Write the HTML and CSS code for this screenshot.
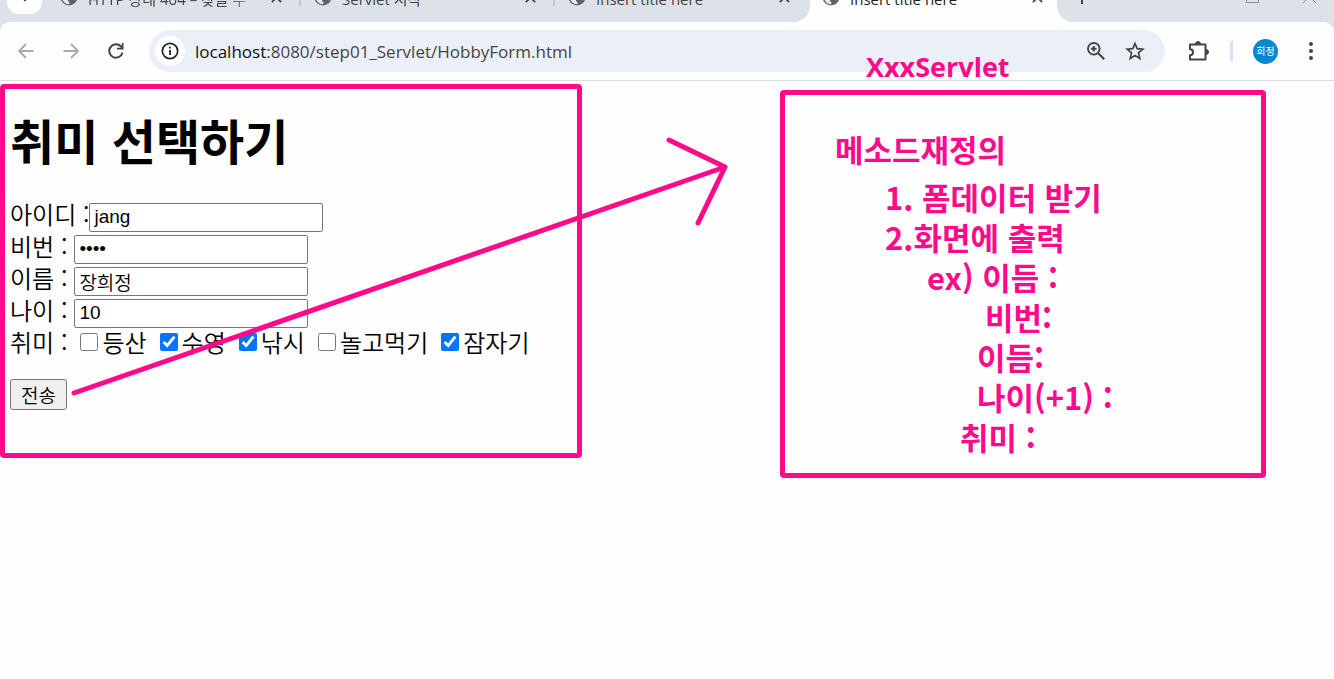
FILE: index.html
```html
<!DOCTYPE html>
<html lang="ko">
<head>
<meta charset="utf-8">
<title>취미 선택하기</title>
<link rel="stylesheet" href="styles.css">
</head>
<body>
<svg class="defs" aria-hidden="true">
  <symbol id="globe" viewBox="0 0 18 18"><circle cx="9" cy="9" r="8.500" fill="#5f6368"/><path d="M8 2c4-.5 7.500 2.500 8 7 0 1.500-.3 2.500-1 3.500-.8-1-2-.5-3-1.500-1-1 0-2.500-1.500-3S8 7.500 7.500 6 9 3.500 8 2zM2 9c2 0 3.500.5 5 1.500s.5 2.500 2 3.500c.8.600.5 1.500 0 2.200C5 16.200 2 13 2 9z" fill="#e8eaed"/></symbol>
  <symbol id="close" viewBox="0 0 12 12"><path d="M1 1l10 10M11 1L1 11" stroke="#474747" stroke-width="2"/></symbol>
</svg>
<header class="browser">
  <nav class="tabs" aria-label="탭">
    <div class="inactive-tabs">
      <button class="tab-search" aria-label="탭 검색"><svg width="12" height="8" viewBox="0 0 12 8"><path d="M1 1l5 5 5-5" fill="none" stroke="#333" stroke-width="2"/></svg></button>
      <div class="tab line"><svg class="globe"><use href="#globe"/></svg><span class="tab-title fade">HTTP 상태 404 – 찾을 수</span><svg class="close"><use href="#close"/></svg></div>
      <div class="tab line"><svg class="globe"><use href="#globe"/></svg><span class="tab-title">Servlet 시작</span><svg class="close"><use href="#close"/></svg></div>
      <div class="tab"><svg class="globe"><use href="#globe"/></svg><span class="tab-title">Insert title here</span><svg class="close"><use href="#close"/></svg></div>
    </div>
    <div class="tab active"><svg class="globe"><use href="#globe"/></svg><span class="tab-title">Insert title here</span><svg class="close"><use href="#close"/></svg></div>
    <div class="strip-end">
      <svg width="14" height="14" viewBox="0 0 14 14"><path d="M7 0v14M0 7h14" stroke="#474747" stroke-width="2"/></svg>
      <span class="window-buttons">
        <svg width="13" height="13" viewBox="0 0 13 13"><path d="M.5.5h12v12H.5z" fill="none" stroke="#8a8d91"/></svg>
        <svg width="13" height="13" viewBox="0 0 13 13"><path d="M0 0l13 13M13 0L0 13" stroke="#8a8d91"/></svg>
      </span>
    </div>
  </nav>
  <div class="toolbar">
    <button class="icon-button" aria-label="뒤로"><svg width="16" height="16" viewBox="0 0 16 16"><path d="M15.500 8H1.500M8 1L1 8l7 7" fill="none" stroke="#aaa" stroke-width="1.800"/></svg></button>
    <button class="icon-button" aria-label="앞으로"><svg width="16" height="16" viewBox="0 0 16 16"><path d="M.5 8h14M8 1l7 7-7 7" fill="none" stroke="#aaa" stroke-width="1.800"/></svg></button>
    <button class="icon-button" aria-label="새로고침"><svg width="16" height="16" viewBox="0 0 16 16"><path d="M14.500 9.500A6.700 6.700 0 1 1 12.800 3.300L14.500 5" fill="none" stroke="#444" stroke-width="2"/><path d="M15.500 0v6.500H9V4.700h4.700V0z" fill="#444"/></svg></button>
    <div class="address">
      <button class="site-info" aria-label="사이트 정보"><svg width="18" height="18" viewBox="0 0 18 18"><circle cx="9" cy="9" r="7.700" fill="none" stroke="#222" stroke-width="1.700"/><path d="M9 8v5M9 4.700v1.800" stroke="#222" stroke-width="1.800"/></svg></button>
      <a class="url" href="#"><span class="host">localhost</span>:8080/step01_Servlet/HobbyForm.html</a>
      <button class="icon-button" aria-label="확대/축소"><svg width="18" height="18" viewBox="0 0 18 18"><circle cx="6.800" cy="6.800" r="5.800" fill="none" stroke="#444" stroke-width="1.900"/><path d="M11 11l6.300 6.300M6.800 4v5.600M4 6.800h5.600" stroke="#444" stroke-width="2"/></svg></button>
      <button class="icon-button" aria-label="북마크"><svg width="20" height="20" viewBox="0 0 20 20"><path d="M10 2.500l2.200 5.200 5.600.5-4.300 3.700 1.300 5.500-4.800-2.900-4.800 2.900 1.300-5.500L2.200 8.200l5.600-.5z" fill="none" stroke="#444" stroke-width="1.700"/></svg></button>
    </div>
    <div class="actions">
      <button class="icon-button" aria-label="확장 프로그램"><svg width="22" height="22" viewBox="0 0 22 22"><path d="M2 4.500h15.500v15H2v-4.300c1.800 0 3-1.300 3-3s-1.200-3-3-3z" fill="none" stroke="#444" stroke-width="2" stroke-linejoin="round"/><path d="M7.500 4a2.500 2.500 0 0 1 5 0zM18 9.500a2.500 2.500 0 0 1 0 5z" fill="#444" stroke="#444"/></svg></button>
      <span class="divider"></span>
      <button class="avatar" aria-label="프로필">희정</button>
      <button class="icon-button" aria-label="메뉴"><svg width="6" height="18" viewBox="0 0 6 18"><g fill="#444"><circle cx="3" cy="2" r="2"/><circle cx="3" cy="9" r="2"/><circle cx="3" cy="16" r="2"/></g></svg></button>
    </div>
  </div>
</header>
<main class="page">
  <form class="hobby-form">
    <h1>취미 선택하기</h1>
    <div class="row tight"><label for="uid">아이디 :</label><input class="field" id="uid" type="text" value="jang"></div>
    <div class="row"><label for="pwd">비번 :</label><input class="field" id="pwd" type="password" value="abcd"></div>
    <div class="row"><label for="name">이름 :</label><input class="field" id="name" type="text" value="장희정"></div>
    <div class="row"><label for="age">나이 :</label><input class="field" id="age" type="text" value="10"></div>
    <div class="row hobbies"><span>취미 :</span>
      <label><input type="checkbox">등산</label>
      <label><input type="checkbox" checked>수영</label>
      <label><input type="checkbox" checked>낚시</label>
      <label><input type="checkbox">놀고먹기</label>
      <label><input type="checkbox" checked>잠자기</label>
    </div>
    <button class="submit" type="button">전송</button>
  </form>
  <svg class="arrow" width="740" height="400" viewBox="0 0 740 400" aria-hidden="true"><path d="M74 312L725 86M669 59l56 27-27 56" fill="none" stroke="#ff0a8a" stroke-width="5" stroke-linecap="round" stroke-linejoin="round"/></svg>
  <aside class="note">
    <h2>XxxServlet</h2>
    <p class="lead">메소드재정의</p>
    <p class="step">1. 폼데이터 받기</p>
    <p class="step">2.화면에 출력</p>
    <p class="example">ex) 이듬 :</p>
    <p class="item far">비번:</p>
    <p class="item">이듬:</p>
    <p class="item">나이(+1) :</p>
    <p class="item near">취미 :</p>
  </aside>
</main>
</body>
</html>
```
FILE: styles.css
```css
* { box-sizing: border-box; }
body {
  margin: 0;
  min-height: 100vh;
  overflow: hidden;
  background: #fefefe;
  color: #000;
  font-family: "Noto Sans CJK KR", sans-serif;
}
button { padding: 0; border: 0; background: none; font-family: inherit; }
svg { display: block; flex: none; }
.defs { position: absolute; width: 0; height: 0; }

.browser { margin-top: -28px; background: #dde1e8; border-bottom: 1px solid #dedede; }
.tabs { display: flex; height: 50px; background: #fefefe; }
.inactive-tabs {
  display: flex;
  border-bottom-right-radius: 16px;
  background: #dde1e8;
}
.tab-search {
  display: grid;
  place-items: center;
  width: 35px;
  height: 32px;
  margin: 10px 6px 0 7px;
  border-radius: 12px;
  background: #fff;
}
.tab {
  display: flex;
  align-items: center;
  gap: 10px;
  width: 254px;
  padding: 0 20px 0 12px;
  font-family: "Open Sans", "Noto Sans CJK KR", sans-serif;
  font-size: 15px;
  color: #444;
}
.line { background: linear-gradient(#c3c5ca, #c3c5ca) right 1px top 20px / 2px 14px no-repeat; }
.active { width: 247px; padding-right: 14px; color: #222; }
.tab-title { flex: 1; padding-top: 3px; white-space: nowrap; overflow: hidden; }
.fade { mask-image: linear-gradient(90deg, #000 82%, transparent); }
.globe { width: 18px; height: 18px; }
.close { width: 11px; height: 11px; }
.strip-end {
  display: flex;
  flex: 1;
  justify-content: space-between;
  padding: 18px 18px 0;
  border-bottom-left-radius: 16px;
  background: #dde1e8;
}
.window-buttons { display: flex; gap: 44px; }

.toolbar {
  display: flex;
  align-items: center;
  height: 58px;
  padding: 0 20px 0 18px;
  border-radius: 10px 10px 0 0;
  background: #fefefe;
}
.toolbar > .icon-button { margin-right: 29px; }
.icon-button { display: grid; place-items: center; }
.address {
  display: flex;
  flex: 1;
  align-items: center;
  gap: 20px;
  height: 42px;
  margin-left: -4px;
  padding: 0 20px 0 6px;
  border-radius: 21px;
  background: #ebeff8;
}
.site-info {
  display: grid;
  place-items: center;
  width: 30px;
  height: 30px;
  border-radius: 50%;
  background: #fff;
}
.url {
  flex: 1;
  margin-left: -10px;
  color: #444;
  font-family: "Open Sans", sans-serif;
  font-size: 17px;
  text-decoration: none;
}
.host { color: #111; }
.actions { display: flex; align-items: center; gap: 20px; padding-left: 23px; }
.divider { width: 3px; height: 20px; background: #d3e3fd; }
.avatar {
  width: 25px;
  height: 25px;
  border-radius: 50%;
  background: #0288d1;
  color: #fff;
  font-size: 10px;
  line-height: 24px;
}
.avatar + .icon-button { margin-left: 10px; }

.page { position: relative; padding-top: 3px; }
.hobby-form {
  width: 582px;
  padding: 20px 5px 43px;
  border: 5px solid #ff0a8a;
  border-radius: 4px;
  font-size: 24px;
  font-weight: 350;
}
h1 { margin: 0 0 32px; font-size: 48px; line-height: 60px; }
.row { display: flex; align-items: center; gap: 7px; height: 32px; line-height: 26px; }
.row > label { align-self: flex-start; }
.tight { gap: 0; }
.field {
  width: 234px;
  height: 29px;
  padding: 0 4px;
  border: 1px solid #767676;
  border-radius: 2px;
  background: #fff;
  color: #000;
  font-family: "Liberation Sans", "Noto Sans CJK KR", sans-serif;
  font-size: 19px;
  font-weight: 350;
}
.hobbies { gap: 13px; height: 26px; }
.hobbies label { display: flex; align-items: center; gap: 4px; }
.hobbies input { width: 18px; height: 18px; margin: 0; accent-color: #0075ff; }
.submit {
  display: block;
  width: 57px;
  height: 31px;
  margin-top: 24px;
  border: 1px solid #767676;
  border-radius: 3px;
  background: #efefef;
  color: #000;
  font-size: 19px;
  font-weight: 350;
  line-height: 28px;
}

/* Drawing laid over the page. */
.arrow { position: absolute; top: 0; left: 0; }
.note {
  position: absolute;
  top: 9px;
  left: 780px;
  width: 486px;
  padding: 34px 50px 16px;
  border: 5px solid #ff0a8a;
  border-radius: 4px;
  color: #ff0a8a;
  font-size: 31px;
  font-weight: 700;
  line-height: 40px;
}
.note h2 {
  position: absolute;
  top: -48px;
  left: 81px;
  margin: 0;
  font-family: "Open Sans", sans-serif;
  font-size: 27px;
  font-weight: 700;
}
.note p { margin: 0; }
.note .lead { margin-bottom: 8px; }
.step { padding-left: 50px; }
.example { padding-left: 92px; }
.item { padding-left: 142px; }
.item.far { padding-left: 150px; }
.item.near { padding-left: 125px; }
```
